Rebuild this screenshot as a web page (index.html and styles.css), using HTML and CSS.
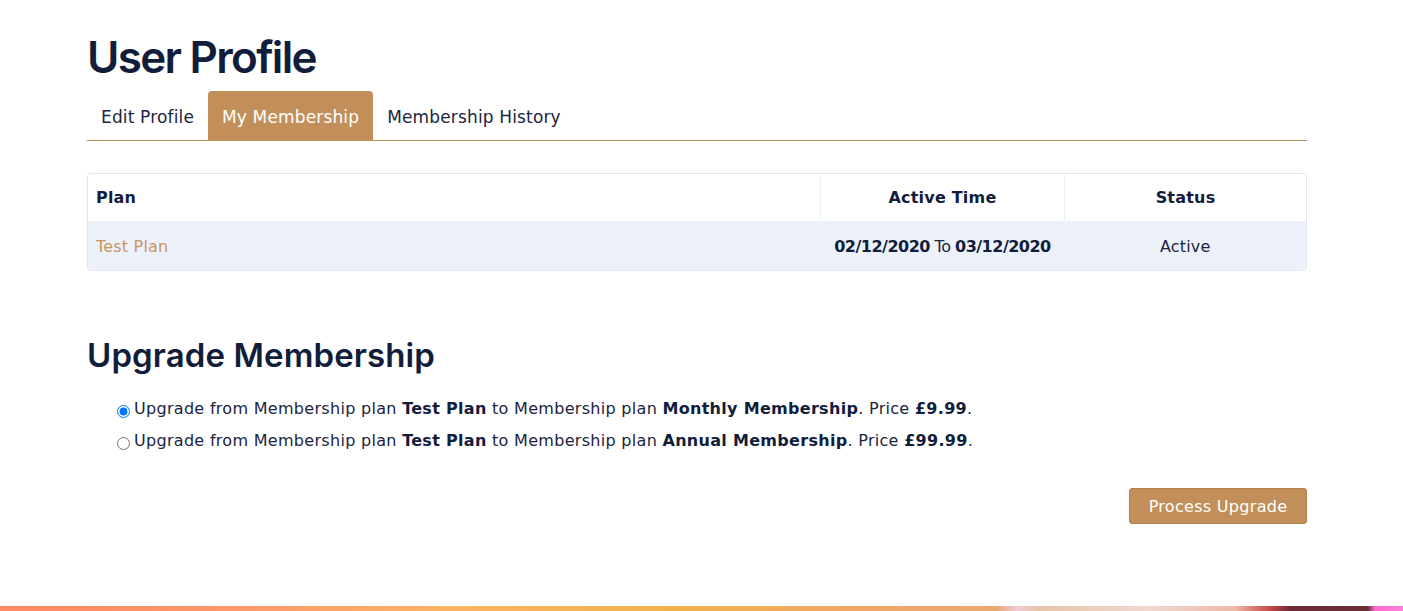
FILE: index.html
```html
<!DOCTYPE html>
<html>
<head>
<meta charset="utf-8">
<link rel="stylesheet" href="styles.css">
</head>
<body>
<div class="page">
  <main class="container">
    <h1 class="title">User Profile</h1>
    <nav class="tabs">
      <a class="tab">Edit Profile</a>
      <a class="tab active">My Membership</a>
      <a class="tab">Membership History</a>
    </nav>
    <div class="table-wrap">
      <table class="plans">
        <thead>
          <tr>
            <th class="c-plan">Plan</th>
            <th class="c-time">Active Time</th>
            <th class="c-status">Status</th>
          </tr>
        </thead>
        <tbody>
          <tr>
            <td class="c-plan"><a class="plan-link">Test Plan</a></td>
            <td class="c-time"><b>02/12/2020</b> To <b>03/12/2020</b></td>
            <td class="c-status">Active</td>
          </tr>
        </tbody>
      </table>
    </div>
    <h2 class="subtitle">Upgrade Membership</h2>
    <form class="upgrade">
      <label class="option"><input type="radio" name="plan" checked>Upgrade from Membership plan <b>Test Plan</b> to Membership plan <b>Monthly Membership</b>. Price <b>£9.99</b>.</label>
      <label class="option"><input type="radio" name="plan">Upgrade from Membership plan <b>Test Plan</b> to Membership plan <b>Annual Membership</b>. Price <b>£99.99</b>.</label>
      <div class="actions">
        <button type="button" class="btn">Process Upgrade</button>
      </div>
    </form>
  </main>
  <div class="strip"></div>
</div>
</body>
</html>
```
FILE: styles.css
```css
html, body {
  margin: 0;
  padding: 0;
  background: #fff;
}
body {
  font-family: "DejaVu Sans", sans-serif;
  color: #1b2440;
}
.page {
  height: 611px;
  display: flex;
  flex-direction: column;
  overflow: hidden;
}
.container {
  width: 1220px;
  margin-left: 87px;
  flex: 1;
}
.title {
  font-family: Inter, sans-serif;
  font-weight: 600;
  font-size: 44px;
  letter-spacing: -1.7px;
  color: #111d3b;
  margin: 30px 0 0;
  line-height: 54px;
  height: 61px;
}
.tabs {
  display: flex;
  border-bottom: 1px solid #c28e57;
  height: 49px;
}
.tab {
  display: flex;
  align-items: center;
  padding: 2px 14px 0;
  font-size: 17px;
  letter-spacing: 0.15px;
  color: #1b2440;
  border-radius: 4px 4px 0 0;
}
.tab.active {
  background: #c28f5a;
  color: #fff;
}
.table-wrap {
  margin-top: 32px;
  border: 1px solid #e3e6ec;
  border-radius: 4px;
  overflow: hidden;
}
.plans {
  width: 100%;
  border-collapse: collapse;
  table-layout: fixed;
  font-size: 16px;
  letter-spacing: 0.2px;
}
.plans th {
  height: 47px;
  font-weight: bold;
  color: #111d3b;
  background: #fff;
  padding: 0 8px;
}
.plans td {
  height: 47px;
  background: #edf1f9;
  padding: 2px 8px 0;
  white-space: nowrap;
}
.plans th + th {
  border-left: 1px solid #edf0f5;
}
.c-plan { width: 716px; text-align: left; }
.c-time { width: 227px; text-align: center; }
.c-status { text-align: center; }
.plans td.c-time { letter-spacing: -0.5px; }
.plan-link { color: #c9955f; }
.plans b { color: #111d3b; }
.subtitle {
  font-family: Inter, sans-serif;
  font-weight: 600;
  font-size: 33px;
  letter-spacing: 0.1px;
  color: #111d3b;
  margin: 64px 0 0;
  line-height: 40px;
}
.upgrade {
  margin-top: 17px;
  padding-left: 30px;
}
.option {
  display: flex;
  align-items: center;
  font-size: 16px;
  letter-spacing: 0.3px;
  height: 32px;
  color: #1b2440;
  white-space: pre;
}
.option b { white-space: pre; color: #111d3b; }
.option input {
  margin: 6px 4px 0 0;
  width: 13px;
  height: 13px;
}
.actions {
  display: flex;
  justify-content: flex-end;
  margin-top: 32px;
}
.btn {
  font-family: "DejaVu Sans", sans-serif;
  font-size: 16px;
  letter-spacing: 0.3px;
  color: #fff;
  background: #c28f5a;
  border: 1px solid #b17f4b;
  border-radius: 3px;
  width: 178px;
  height: 36px;
  padding: 0;
}
.strip {
  height: 5px;
  background: linear-gradient(90deg, #ff8862 0%, #fc9a6c 18%, #fbb464 32%, #f2b14c 48%, #f0a668 62%, #eaa870 71%, #f2c8d8 72.5%, #e8c4a8 74%, #f0d8d0 82%, #f0b8a8 88%, #c84a48 90.5%, #6e2a38 92%, #6a2e3a 97.5%, #ff6ad0 98%, #ff80d8 100%);
}
```
